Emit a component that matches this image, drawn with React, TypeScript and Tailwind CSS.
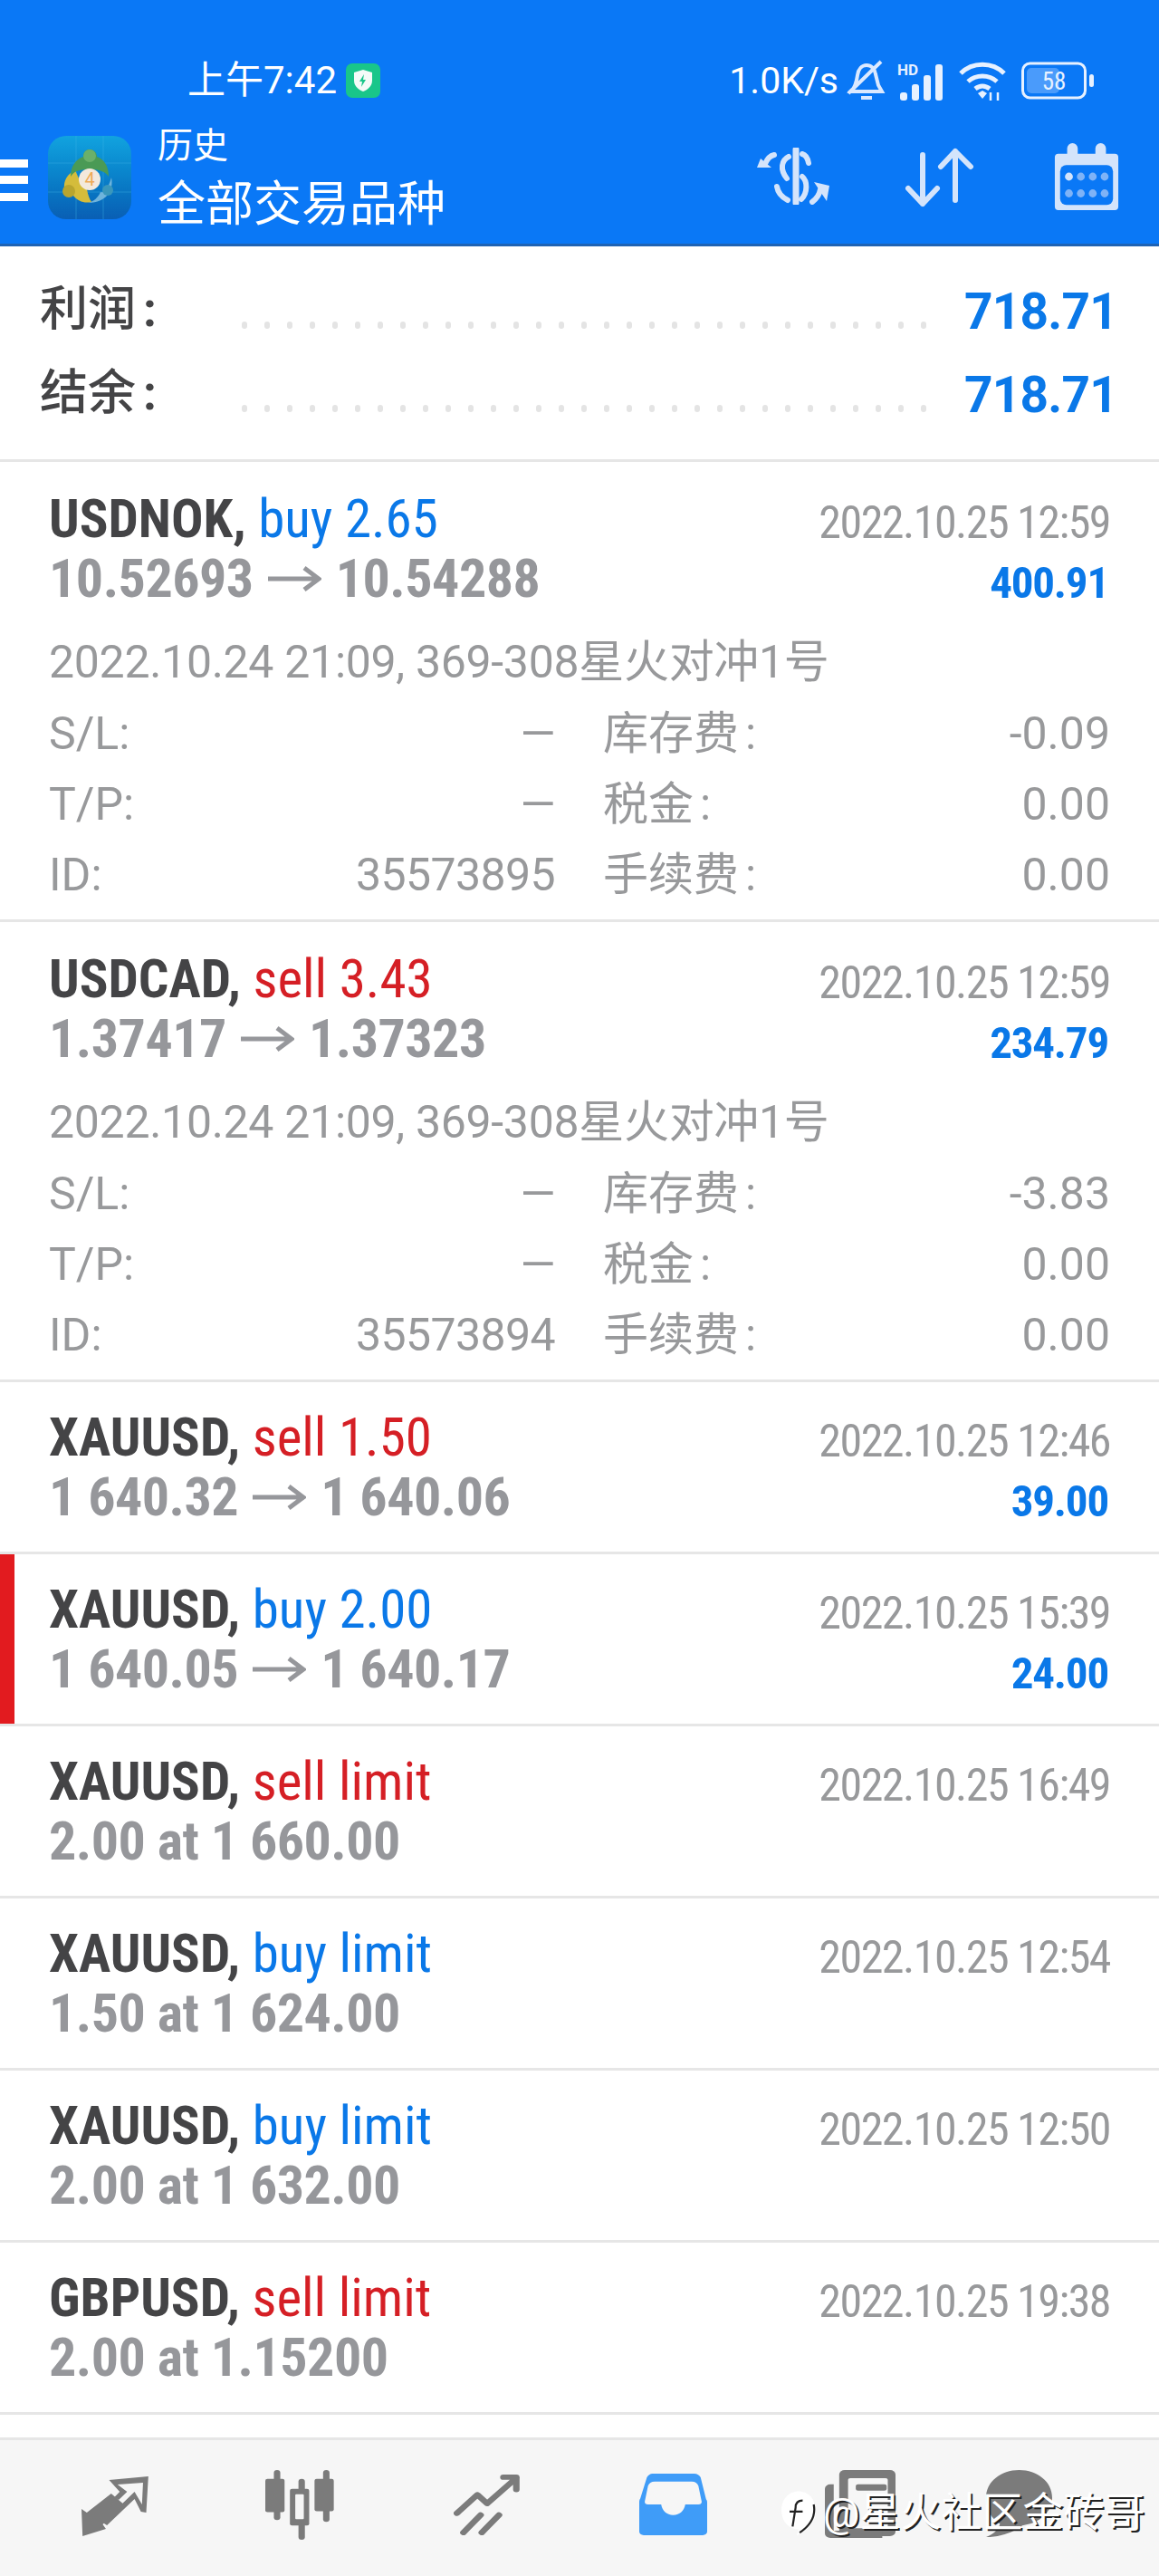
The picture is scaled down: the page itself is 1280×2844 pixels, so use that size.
import React from "react";

const F = '"Roboto","Noto Sans CJK SC",sans-serif';

function Arrow() {
  return (
    <svg width="59" height="28" viewBox="0 0 59 28" className="mx-[16px] flex-none" fill="none" stroke="#96979b" strokeWidth="5">
      <path d="M0 14H55M40 2l16 12-16 12" />
    </svg>
  );
}

function Head({ sym, side, color, right }: { sym: string; side: string; color: string; right: string }) {
  return (
    <div className="flex h-[66px] items-center justify-between">
      <div className="whitespace-nowrap text-[59px] leading-[66px] [font-stretch:75%]">
        <span className="font-bold text-[#444446]">{sym},</span>{" "}
        <span style={{ color }}>{side}</span>
      </div>
      <div className="mt-[8px] whitespace-nowrap text-[50px] tracking-[-1.5px] text-[#98999b] [font-stretch:75%]">{right}</div>
    </div>
  );
}

function Line2({ a, b, text, profit }: any) {
  return (
    <div className="flex h-[66px] items-center justify-between text-[#96979b]">
      <div className="flex items-center whitespace-nowrap text-[60px] font-bold tracking-[-0.5px] [font-stretch:75%]">
        {text ? text : (<>{a}<Arrow />{b}</>)}
      </div>
      {profit && <div className="mr-[2px] mt-[9px] text-[49px] font-bold tracking-[-1.2px] text-[#0a78e8] [font-stretch:75%]">{profit}</div>}
    </div>
  );
}

function Small({ sym, side, color, date, a, b, profit, text, marked }: any) {
  return (
    <div className="relative h-[190px] border-b-[3px] border-[#e6e6e6] px-[54px] pt-[28px]">
      {marked && <div className="absolute bottom-0 left-0 top-0 w-[16px] bg-[#e21b1f]" />}
      <Head sym={sym} side={side} color={color} right={date} />
      <Line2 a={a} b={b} text={text} profit={profit} />
    </div>
  );
}

function Big({ sym, side, color, date, a, b, profit, swap, id }: any) {
  const rows = [["S/L:", "—", "库存费", swap], ["T/P:", "—", "税金", "0.00"], ["ID:", id, "手续费", "0.00"]];
  return (
    <div className="h-[508px] border-b-[3px] border-[#e6e6e6] px-[54px] pt-[30px]">
      <Head sym={sym} side={side} color={color} right={date} />
      <Line2 a={a} b={b} profit={profit} />
      <div className="mt-[19px] text-[50px] text-[#98999b]">
        <div className="flex h-[80px] items-center whitespace-nowrap tracking-[-0.3px] [font-stretch:92%]">2022.10.24 21:09, 369-308星火对冲1号</div>
        {rows.map((r) => (
          <div key={r[0]} className="flex h-[78px] items-center">
            <div className="flex w-[559px] flex-none justify-between whitespace-nowrap [font-stretch:88%]">
              <span>{r[0]}</span>
              <span className="tracking-[-0.6px]">{r[1]}</span>
            </div>
            <div className="ml-[53px] w-[200px] flex-none whitespace-nowrap">
              {r[2]}<span className="ml-[7px]">:</span>
            </div>
            <div className="flex-1 text-right [font-stretch:90%]">{r[3]}</div>
          </div>
        ))}
      </div>
    </div>
  );
}

const DOTS = Array.from({ length: 31 }, (_, i) => i);

function SumRow({ label, value }: { label: string; value: string }) {
  return (
    <div className="flex h-[92px] items-center">
      <div className="w-[223px] flex-none whitespace-nowrap text-[53px] font-medium text-[#444446]">
        {label}<span className="ml-[8px] font-bold">:</span>
      </div>
      <div className="mt-[32px] flex w-[756px] flex-none justify-between">
        {DOTS.map((i) => <span key={i} className="h-[8px] w-[6px] rounded-full bg-[#e4e4e4]" />)}
      </div>
      <div className="ml-auto mt-[2px] text-[55px] font-bold tracking-[-0.8px] text-[#0a78e8] [font-stretch:88%]">{value}</div>
    </div>
  );
}

export default function App() {
  const BLUE = "#0a78e8", RED = "#d51f25";
  return (
    <div className="relative h-[2844px] w-[1280px] overflow-hidden bg-white" style={{ fontFamily: F }}>
      <header className="relative h-[272px] border-b-[3px] border-[#1f63b4] bg-[#0a78f6] text-white">
        <div className="flex h-[176px] items-start justify-between pr-[72px] pt-[66px]">
          <div className="ml-[207px] flex items-center gap-[10px] text-[42px] leading-[46px]">
            <span>上午7:42</span>
            <svg width="38" height="38" viewBox="0 0 38 38">
              <rect width="38" height="38" rx="7" fill="#19c68a" />
              <path d="M19 7l10 3v9c0 6-5 10-10 12-5-2-10-6-10-12v-9z" fill="#f4fbf8" />
              <path d="M20 12l-5 8h3l-1 6 5-8h-3z" fill="#19c68a" />
            </svg>
          </div>
          <div className="flex items-center text-[41px] leading-[46px]">
            <span>1.0K/s</span>
            <svg width="44" height="46" viewBox="0 0 44 46" fill="none" stroke="#dbe9ff" strokeWidth="4" className="ml-[9px]">
              <path d="M5 35c5-5 6-11 7-18 1-7 5-11 10-11s9 4 10 10l3 12 4 7zM16 42h12M2 37L38 2" />
            </svg>
            <svg width="56" height="46" viewBox="0 0 56 46" className="ml-[12px]" fill="#e7f1ff">
              <text x="0" y="17" fontSize="17" fontWeight="700" fontFamily="Roboto">HD</text>
              <rect x="3" y="36" width="8" height="9" rx="3" />
              <rect x="16" y="27" width="8" height="18" rx="3" />
              <rect x="29" y="17" width="8" height="28" rx="3" />
              <rect x="42" y="5" width="8" height="40" rx="3" />
            </svg>
            <svg width="52" height="46" viewBox="0 0 52 46" fill="none" stroke="#e7f1ff" strokeWidth="5" className="ml-[12px]">
              <path d="M2 15C15 2 37 2 50 15M10 24c9-8 23-8 32 0M18 32c5-4 11-4 16 0" />
              <path d="M21 37l5-3 5 3-5 6z" fill="#e7f1ff" stroke="none" />
              <path d="M35 36v9M43 36v9" strokeWidth="2.5" />
            </svg>
            <svg width="80" height="42" viewBox="0 0 80 42" className="ml-[17px]" fill="none">
              <rect x="1.5" y="2" width="69" height="38" rx="8" stroke="#e7f1ff" strokeWidth="3" />
              <rect x="6" y="7" width="36" height="28" rx="5" fill="#4a9bfb" />
              <rect x="75" y="14" width="5" height="14" rx="2.5" fill="#e7f1ff" />
              <text x="36" y="31" textAnchor="middle" fontSize="27" fill="#e7f1ff" fontFamily="Roboto" style={{ fontStretch: "85%" }}>58</text>
            </svg>
          </div>
        </div>
        <div className="absolute left-0 top-[176px] h-[9px] w-[31px] bg-white" />
        <div className="absolute left-0 top-[194px] h-[9px] w-[31px] bg-white" />
        <div className="absolute left-0 top-[213px] h-[9px] w-[31px] bg-white" />
        <div className="absolute left-[53px] top-[150px] h-[92px] w-[92px] overflow-hidden rounded-[20px] bg-gradient-to-b from-[#12a3df] to-[#0a5fb4]">
          <svg viewBox="0 0 92 92" className="h-full w-full">
            <path d="M31 0v92M61 0v92M0 30h92M0 62h92" stroke="#3fb4e6" strokeWidth="0.8" opacity="0.5" />
            <path d="M30 38c-9 4-13 12-12 20 1 4 5 3 8 3l2 5c5 6 12 9 20 7-2-3-4-8-5-14-6-4-9-12-13-21z" fill="#d4bc3b" />
            <circle cx="23" cy="61" r="7" fill="#b8a52f" />
            <path d="M70 46c3 14-6 28-25 28 5-2 10-5 13-12 5 2 9-6 12-16z" fill="#6fb4dc" />
            <circle cx="66" cy="60" r="6" fill="#3a97bb" />
            <path d="M46 15c4 0 8 3 8 8 8 3 13 10 13 22-3-5-9-8-21-8s-17 2-21 8c0-12 6-19 14-22 0-5 3-8 7-8z" fill="#4a9a55" />
            <circle cx="46" cy="22" r="7" fill="#6bb06a" />
            <circle cx="46" cy="48" r="12" fill="#f3e9dd" />
            <text x="46" y="55" textAnchor="middle" fontSize="20" fill="#eeaa58" fontFamily="Roboto">4</text>
          </svg>
        </div>
        <div className="absolute left-[174px] top-[136px] text-[39px] leading-[50px]">历史</div>
        <div className="absolute left-[174px] top-[195px] whitespace-nowrap text-[53px] leading-[62px]">全部交易品种</div>
        <svg width="81" height="63" viewBox="0 0 81 63" className="absolute left-[836px] top-[163px]" fill="none" stroke="#d4e4fb" strokeWidth="6" strokeLinecap="round">
          <path d="M43 2v59" strokeWidth="7" />
          <path d="M50 7c4 1 6 5 7 10M35 10c-8 4-10 14-2 24M50 32c6 5 6 18-1 25M22 43c1 6 4 11 12 15" />
          <path d="M19 8c-5 1-8 5-10 10" />
          <path d="M0 22l4-10 12 10z" fill="#d4e4fb" stroke="none" />
          <path d="M61 60c4-3 8-8 9-14" />
          <path d="M80 42L63 38l14 21z" fill="#d4e4fb" stroke="none" />
        </svg>
        <svg width="77" height="66" viewBox="0 0 77 66" className="absolute left-[999px] top-[163px]" fill="none" stroke="#d4e4fb" strokeWidth="6" strokeLinecap="round" strokeLinejoin="round">
          <path d="M20 8v54M4 45l16 17 16-17" />
          <path d="M56 4v54M40 21L56 4l17 17" />
        </svg>
        <svg width="72" height="74" viewBox="0 0 72 76" className="absolute left-[1164px] top-[158px]">
          <path d="M4 12h10V6a6 6 0 0 1 6-6h0a6 6 0 0 1 6 6v6h20V6a6 6 0 0 1 6-6h0a6 6 0 0 1 6 6v6h10a4 4 0 0 1 4 4v56a4 4 0 0 1-4 4H4a4 4 0 0 1-4-4V16a4 4 0 0 1 4-4z" fill="#d4e4fb" />
          <rect x="6" y="25" width="60" height="45" rx="7" fill="#0a78f6" />
          {[0, 1, 2, 3].map((i) => <circle key={i} cx={16 + i * 13.5} cy="38" r="4.5" fill={i === 0 ? "#d4e4fb" : "#7fb3f7"} />)}
          {[0, 1, 2, 3].map((i) => <circle key={i} cx={16 + i * 13.5} cy="57" r="4.5" fill="#7fb3f7" />)}
        </svg>
      </header>

      <section className="h-[238px] border-b-[3px] border-[#e6e6e6] pl-[44px] pr-[46px] pt-[25px]">
        <SumRow label="利润" value="718.71" />
        <SumRow label="结余" value="718.71" />
      </section>

      <Big sym="USDNOK" side="buy 2.65" color={BLUE} date="2022.10.25 12:59" a="10.52693" b="10.54288" profit="400.91" swap="-0.09" id="35573895" />
      <Big sym="USDCAD" side="sell 3.43" color={RED} date="2022.10.25 12:59" a="1.37417" b="1.37323" profit="234.79" swap="-3.83" id="35573894" />
      <Small sym="XAUUSD" side="sell 1.50" color={RED} date="2022.10.25 12:46" a="1 640.32" b="1 640.06" profit="39.00" />
      <Small marked sym="XAUUSD" side="buy 2.00" color={BLUE} date="2022.10.25 15:39" a="1 640.05" b="1 640.17" profit="24.00" />
      <Small sym="XAUUSD" side="sell limit" color={RED} date="2022.10.25 16:49" text="2.00 at 1 660.00" />
      <Small sym="XAUUSD" side="buy limit" color={BLUE} date="2022.10.25 12:54" text="1.50 at 1 624.00" />
      <Small sym="XAUUSD" side="buy limit" color={BLUE} date="2022.10.25 12:50" text="2.00 at 1 632.00" />
      <Small sym="GBPUSD" side="sell limit" color={RED} date="2022.10.25 19:38" text="2.00 at 1.15200" />

      <nav className="absolute bottom-0 left-0 right-0 h-[153px] border-t-[3px] border-[#e6e6e6] bg-[#f6f6f6]">
        <svg width="75" height="66" viewBox="0 0 64 66" preserveAspectRatio="none" className="absolute left-[90px] top-[40px]">
          <path d="M26 4L63 0l-2 40-5-1-6-14-26 29-4-3 30-34 7 14 1-24-24 2 9 8-8 9-4-3 5-6z" fill="#7b7b7b" />
          <path d="M28 19l12 12L20 53l3 5-22 8L0 36l5 4z" fill="#7b7b7b" />
        </svg>
        <svg width="78" height="77" viewBox="0 0 66 78" preserveAspectRatio="none" className="absolute left-[293px] top-[33px]" fill="#7b7b7b">
          <rect x="8" y="0" width="6" height="56" rx="3" />
          <rect x="0" y="10" width="18" height="37" rx="2" />
          <rect x="31" y="10" width="6" height="68" rx="3" />
          <rect x="23" y="21" width="18" height="41" rx="2" />
          <rect x="28" y="27" width="8" height="28" rx="1" fill="#f6f6f6" />
          <rect x="54" y="0" width="6" height="58" rx="3" />
          <rect x="46" y="10" width="18" height="36" rx="2" />
        </svg>
        <svg width="74" height="68" viewBox="0 0 62 70" preserveAspectRatio="none" className="absolute left-[501px] top-[37px]" fill="none" stroke="#7b7b7b" strokeWidth="6" strokeLinecap="round" strokeLinejoin="round">
          <path d="M3 45l19-21 9 10L58 5M46 4h12v14M9 67l16-20M26 67l16-20" />
        </svg>
        <svg width="75" height="68" viewBox="0 0 62 70" preserveAspectRatio="none" className="absolute left-[706px] top-[37px]">
          <path d="M12 0h38c3 0 5 2 6 4l5 25c1 1 1 3 1 4v33a4 4 0 0 1-4 4H4a4 4 0 0 1-4-4V33c0-2 0-3 1-5L7 4c1-2 3-4 5-4z" fill="#3f9cf8" />
          <path d="M14 9h34c3 0 5 2 6 5l3 18c0 2-1 3-3 3H42c-1 7-5 12-11 12s-10-5-11-12H8c-2 0-3-1-3-3l3-18c1-3 3-5 6-5z" fill="#f6f6f6" />
        </svg>
        <svg width="78" height="75" viewBox="0 0 64 76" preserveAspectRatio="none" className="absolute left-[911px] top-[33px]">
          <rect x="13" y="0" width="51" height="74" rx="5" fill="#7b7b7b" />
          <rect x="21" y="9" width="36" height="56" rx="2" fill="#f6f6f6" />
          <rect x="28" y="16" width="28" height="7" rx="2" fill="#7b7b7b" />
          <path d="M8 16v52h44v8H5a5 5 0 0 1-5-5V21a5 5 0 0 1 5-5z" fill="#7b7b7b" />
        </svg>
        <svg width="73" height="75" viewBox="0 0 62 76" preserveAspectRatio="none" className="absolute left-[1089px] top-[33px]">
          <path d="M31 0c17 0 31 13 31 31 0 16-12 29-28 31-7 7-20 13-34 13 8-4 12-9 13-15C5 55 0 44 0 31 0 13 14 0 31 0z" fill="#7b7b7b" />
        </svg>
        <div className="absolute left-[862px] top-[55px] flex items-center whitespace-nowrap text-[45px] leading-[52px] text-white [text-shadow:2px_2px_0_#222]">
          <svg width="40" height="52" viewBox="0 0 36 46" className="mr-[7px]">
            <path d="M18 1c10 0 17 8 17 20 0 13-11 19-19 24l2-6C8 38 1 31 1 20 1 9 8 1 18 1z" fill="#fff" />
            <path d="M22 10c-5 0-7 3-7 7l-3 19M9 21h13M33 14c2 10-2 20-14 28" fill="none" stroke="#222" strokeWidth="2" />
          </svg>
          <span>@星火社区金砖哥</span>
        </div>
      </nav>
    </div>
  );
}
